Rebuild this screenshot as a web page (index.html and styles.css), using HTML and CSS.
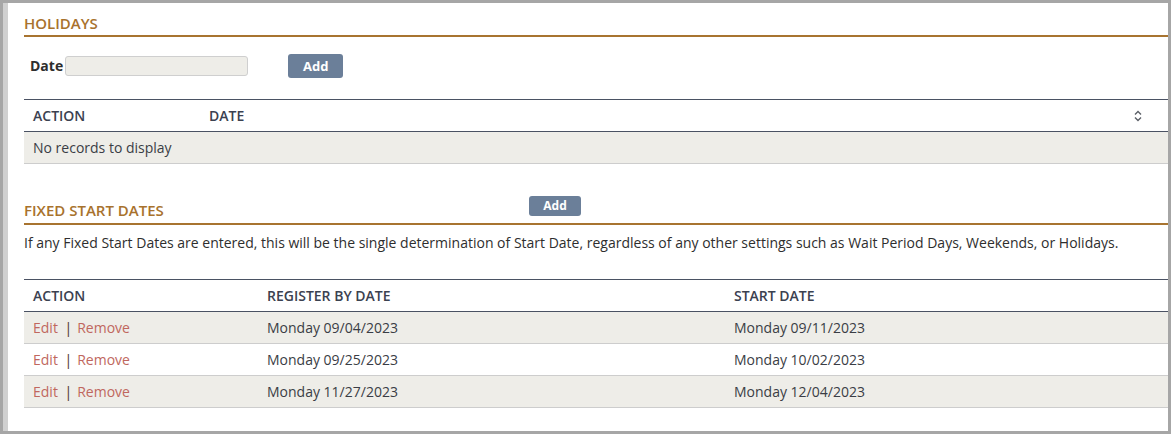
FILE: index.html
```html
<!DOCTYPE html>
<html lang="en">
<head>
  <meta charset="UTF-8" />
  <meta name="viewport" content="width=device-width, initial-scale=1.0" />
  <title>Holidays and Fixed Start Dates</title>
  <link rel="stylesheet" href="styles.css">
</head>
<body>
  <div class="frame">
    <div class="panel">

      <!-- Holidays -->
      <div class="section-head">
        <span class="section-title">HOLIDAYS</span>
      </div>

      <div class="add-row">
        <label for="holiday-date">Date</label>
        <input type="text" id="holiday-date" class="date-input" />
        <button class="btn">Add</button>
      </div>

      <table class="grid holidays">
        <colgroup>
          <col class="col-action-sm" />
          <col />
          <col class="col-sort" />
        </colgroup>
        <thead>
          <tr>
            <th>ACTION</th>
            <th>DATE</th>
            <th class="sort-cell">
              <svg width="10" height="12" viewBox="0 0 10 12" aria-hidden="true">
                <path d="M2 4.5 L5 1.5 L8 4.5" fill="none" stroke="#5b5f66" stroke-width="1.4" />
                <path d="M2 7.5 L5 10.5 L8 7.5" fill="none" stroke="#5b5f66" stroke-width="1.4" />
              </svg>
            </th>
          </tr>
        </thead>
        <tbody>
          <tr class="odd">
            <td colspan="3">No records to display</td>
          </tr>
        </tbody>
      </table>

      <!-- Fixed start dates -->
      <div class="section-head second">
        <span class="section-title wide">FIXED START DATES</span>
        <button class="btn btn-sm">Add</button>
      </div>

      <p class="note">If any Fixed Start Dates are entered, this will be the single determination of Start Date, regardless of any other settings such as Wait Period Days, Weekends, or Holidays.</p>

      <table class="grid fixed">
        <colgroup>
          <col class="col-action" />
          <col class="col-register" />
          <col />
        </colgroup>
        <thead>
          <tr>
            <th>ACTION</th>
            <th>REGISTER BY DATE</th>
            <th>START DATE</th>
          </tr>
        </thead>
        <tbody>
          <tr class="odd">
            <td><a href="#" class="link">Edit</a> <span class="sep">|</span><a href="#" class="link">Remove</a></td>
            <td>Monday 09/04/2023</td>
            <td>Monday 09/11/2023</td>
          </tr>
          <tr>
            <td><a href="#" class="link">Edit</a> <span class="sep">|</span><a href="#" class="link">Remove</a></td>
            <td>Monday 09/25/2023</td>
            <td>Monday 10/02/2023</td>
          </tr>
          <tr class="odd">
            <td><a href="#" class="link">Edit</a> <span class="sep">|</span><a href="#" class="link">Remove</a></td>
            <td>Monday 11/27/2023</td>
            <td>Monday 12/04/2023</td>
          </tr>
        </tbody>
      </table>

    </div>
  </div>
</body>
</html>
```

FILE: styles.css
```css
body {
  margin: 0;
  padding: 0;
  font-family: 'Open Sans', 'Noto Sans', sans-serif;
  font-size: 14px;
  line-height: 20px;
  color: #3a3d45;
}
.frame {
  background-color: #a6a6a6;
  padding: 3px;
  height: 434px;
  box-sizing: border-box;
}
.panel {
  background-color: #fff;
  border-left: 5px solid #d0d0d0;
  height: 100%;
  box-sizing: border-box;
  padding: 10px 0 0 16px;
}
/* Section headings */
.section-head {
  display: flex;
  align-items: flex-start;
  border-bottom: 2px solid #a87430;
  padding-bottom: 2px;
}
.section-head.second {
  margin-top: 36px;
  padding-bottom: 3px;
}
.section-title {
  font-size: 15px;
  font-weight: 600;
  color: #a8722d;
}
.section-title.wide {
  width: 505px;
}
/* Buttons */
.btn {
  background-color: #6b7f99;
  color: #fff;
  border: none;
  border-radius: 3px;
  font-family: inherit;
  font-weight: bold;
  font-size: 13px;
  width: 55px;
  height: 24px;
  padding: 0;
  cursor: pointer;
}
.btn-sm {
  width: 52px;
  height: 20px;
  font-size: 12px;
  line-height: 20px;
  margin-top: -4px;
}
/* Holiday add form */
.add-row {
  display: flex;
  align-items: center;
  margin-top: 17px;
  padding-left: 6px;
}
.add-row label {
  font-weight: bold;
  color: #2e2e2e;
  margin-right: 2px;
}
.date-input {
  width: 183px;
  height: 20px;
  box-sizing: border-box;
  background-color: #eeede8;
  border: 1px solid #cfcfcf;
  border-radius: 3px;
  margin: 0 40px 0 0;
}
/* Grids */
.grid {
  width: 100%;
  border-collapse: collapse;
  table-layout: fixed;
}
.grid.holidays {
  margin-top: 21px;
}
.grid th,
.grid td {
  text-align: left;
  padding: 6px 9px 5px;
  white-space: nowrap;
}
.grid th {
  font-weight: 600;
  color: #3b4150;
  border-top: 1px solid #4a5263;
  border-bottom: 1px solid #4a5263;
}
.grid td {
  border-bottom: 1px solid #cdcdcd;
}
.grid tr.odd td {
  background-color: #eeede8;
}
.col-action-sm { width: 176px; }
.col-sort { width: 60px; }
.col-action { width: 234px; }
.col-register { width: 467px; }
.sort-cell {
  text-align: center !important;
  vertical-align: middle;
}
.sort-cell svg {
  display: block;
  margin: 0 auto;
}
.note {
  margin: 8px 0 26px;
  color: #2e2e2e;
}
.link {
  color: #c0675e;
  text-decoration: none;
}
.sep {
  color: #4a3426;
  margin: 0 5px 0 3px;
}
```
